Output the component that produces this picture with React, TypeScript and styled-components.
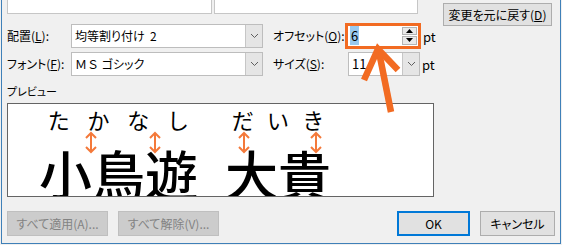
import * as React from "react"
import styled, { createGlobalStyle } from "styled-components"

const GlobalStyle = createGlobalStyle`
  html, body {
    margin: 0;
    padding: 0;
    background: #f0f0f0;
  }
  body {
    font-family: "Noto Sans CJK JP", "Liberation Sans", sans-serif;
    font-size: 12px;
    font-feature-settings: "palt";
    color: #000;
  }
`

const ORANGE = "#f26b22"

const Window = styled.div`
  position: relative;
  box-sizing: border-box;
  margin-left: 1px;
  width: 560px;
  height: 244px;
  padding-left: 5px;
  background: #f0f0f0;
  border-left: 1px solid #3f80b8;
  border-right: 1px solid #3f80b8;
  border-bottom: 1px solid #3f80b8;
  overflow: hidden;
`

const Top = styled.div`
  display: flex;
`

const Main = styled.div`
  flex: 1;
  display: flex;
  flex-direction: column;
`

const Stubs = styled.div`
  display: flex;
  gap: 2px;
`

const Stub = styled.div<{ $w: number }>`
  box-sizing: border-box;
  width: ${p => p.$w}px;
  height: 14px;
  background: #fff;
  border: 1px solid #c6c6c6;
  border-top: none;
`

const FormRow = styled.div<{ $mt: number }>`
  display: flex;
  align-items: center;
  height: 24px;
  margin-top: ${p => p.$mt}px;
`

const Label = styled.label<{ $w: number; $ml?: number }>`
  width: ${p => p.$w}px;
  margin-left: ${p => p.$ml ?? 0}px;
  white-space: nowrap;
  line-height: 24px;
  u {
    text-decoration: underline;
    text-underline-offset: 1px;
  }
`

const Combo = styled.div<{ $w: number }>`
  box-sizing: border-box;
  display: flex;
  width: ${p => p.$w}px;
  height: 24px;
  background: #fff;
  border: 1px solid #bdbdbd;
`

const ComboText = styled.div<{ $size?: number }>`
  flex: 1;
  padding-left: 3px;
  line-height: 22px;
  font-size: ${p => p.$size ?? 12}px;
  white-space: pre;
  overflow: hidden;
  .wide {
    font-feature-settings: normal;
  }
`

const ComboArrow = styled.div`
  width: 16px;
  display: flex;
  align-items: center;
  justify-content: center;
  background: #e5e5e5;
  border-left: 1px solid #c6c6c6;
`

const SpinFrame = styled.div`
  box-sizing: border-box;
  display: flex;
  align-items: stretch;
  width: 76px;
  height: 26px;
  margin-top: -1px;
  background: #fff;
  border: 3px solid ${ORANGE};
`

const SpinText = styled.div`
  flex: 1;
  padding-left: 2px;
  display: flex;
  align-items: center;
  font-size: 13px;
  span {
    background: #99c9ef;
    padding: 0 1px;
    line-height: 19px;
  }
`

const SpinButtons = styled.div`
  width: 15px;
  margin: 1px 1px 1px 0;
  display: flex;
  flex-direction: column;
  gap: 1px;
`

const SpinBtn = styled.div`
  flex: 1;
  display: flex;
  align-items: center;
  justify-content: center;
  background: #e9e9e9;
  border: 1px solid #b4b4b4;
`

const Unit = styled.span`
  margin-left: 2px;
  font-size: 13px;
`

const Button = styled.button<{ $w: number; $primary?: boolean }>`
  box-sizing: border-box;
  width: ${p => p.$w}px;
  height: 25px;
  padding: 0;
  font-family: inherit;
  font-size: 12px;
  font-feature-settings: "palt";
  color: #000;
  background: #e1e1e1;
  border: ${p => (p.$primary ? "2px solid #0078d7" : "1px solid #adadad")};
  &:disabled {
    background: #cccccc;
    border-color: #bfbfbf;
    color: #838383;
  }
  u {
    text-underline-offset: 1px;
  }
`

const ResetButton = styled(Button)`
  height: 23px;
  margin: 3px 8px 0 0;
`

const PreviewLabel = styled.div`
  margin-top: 8px;
  line-height: 14px;
  font-size: 11px;
`

const Preview = styled.div`
  position: relative;
  box-sizing: border-box;
  width: 427px;
  height: 94px;
  margin-top: 5px;
  padding: 4px 0 0 31px;
  background: #fff;
  border: 1px solid #646464;
  overflow: hidden;
  display: flex;
  gap: 27px;
  font-feature-settings: normal;
`

const RubyGroup = styled.div`
  display: flex;
  flex-direction: column;
`

const Kana = styled.div`
  display: flex;
  justify-content: space-around;
  font-size: 22px;
  line-height: 22px;
`

const Kanji = styled.div`
  margin-top: 17px;
  font-size: 53px;
  font-weight: 500;
  line-height: 53px;
  white-space: nowrap;
`

const Marker = styled.svg<{ $x: number }>`
  position: absolute;
  top: 27px;
  left: ${p => p.$x}px;
`

const Footer = styled.div`
  display: flex;
  margin-top: 14px;
  padding-right: 5px;
  gap: 10px;
`

const Spacer = styled.div`
  flex: 1;
`

const Callout = styled.svg`
  position: absolute;
  left: -2px;
  top: 0;
  pointer-events: none;
`

const Chevron = () => (
  <svg width="9" height="6" viewBox="0 0 9 6">
    <polyline points="1,1 4.5,4.5 8,1" fill="none" stroke="#5f5f5f" strokeWidth="1" />
  </svg>
)

const DoubleArrow = ({ x }: { x: number }) => (
  <Marker $x={x} width="14" height="23" viewBox="0 0 14 23">
    <g fill="none" stroke="#f4793a" strokeWidth="2">
      <line x1="7" y1="2" x2="7" y2="21" />
      <polyline points="2,7 7,2 12,7" />
      <polyline points="2,16 7,21 12,16" />
    </g>
  </Marker>
)

export default function App() {
  return (
    <>
      <GlobalStyle />
      <Window>
        <Top>
          <Main>
            <Stubs>
              <Stub $w={205} />
              <Stub $w={204} />
            </Stubs>
            <FormRow $mt={10}>
              <Label $w={64}>
                配置(<u>L</u>):
              </Label>
              <Combo $w={192}>
                <ComboText>均等割り付け  2</ComboText>
                <ComboArrow>
                  <Chevron />
                </ComboArrow>
              </Combo>
              <Label $w={72} $ml={10}>
                オフセット(<u>O</u>):
              </Label>
              <SpinFrame>
                <SpinText>
                  <span>6</span>
                </SpinText>
                <SpinButtons>
                  <SpinBtn>
                    <svg width="7" height="4" viewBox="0 0 7 4">
                      <polygon points="0,4 3.5,0 7,4" fill="#000" />
                    </svg>
                  </SpinBtn>
                  <SpinBtn>
                    <svg width="7" height="4" viewBox="0 0 7 4">
                      <polygon points="0,0 3.5,4 7,0" fill="#000" />
                    </svg>
                  </SpinBtn>
                </SpinButtons>
              </SpinFrame>
              <Unit>pt</Unit>
            </FormRow>
            <FormRow $mt={4}>
              <Label $w={64}>
                フォント(<u>F</u>):
              </Label>
              <Combo $w={192}>
                <ComboText>
                  <span className="wide">ＭＳ </span>ゴシック
                </ComboText>
                <ComboArrow>
                  <Chevron />
                </ComboArrow>
              </Combo>
              <Label $w={75} $ml={10}>
                サイズ(<u>S</u>):
              </Label>
              <Combo $w={72}>
                <ComboText $size={13}>11</ComboText>
                <ComboArrow>
                  <Chevron />
                </ComboArrow>
              </Combo>
              <Unit>pt</Unit>
            </FormRow>
          </Main>
          <ResetButton $w={109}>
            変更を元に戻す(<u>D</u>)
          </ResetButton>
        </Top>

        <PreviewLabel>プレビュー</PreviewLabel>
        <Preview>
          <RubyGroup>
            <Kana>
              <span>た</span>
              <span>か</span>
              <span>な</span>
              <span>し</span>
            </Kana>
            <Kanji>小鳥遊</Kanji>
          </RubyGroup>
          <RubyGroup>
            <Kana>
              <span>だ</span>
              <span>い</span>
              <span>き</span>
            </Kana>
            <Kanji>大貴</Kanji>
          </RubyGroup>
          <DoubleArrow x={76} />
          <DoubleArrow x={140} />
          <DoubleArrow x={229} />
          <DoubleArrow x={301} />
        </Preview>

        <Footer>
          <Button $w={101} disabled>
            すべて適用(A)...
          </Button>
          <Button $w={101} disabled>
            すべて解除(V)...
          </Button>
          <Spacer />
          <Button $w={73} $primary>
            OK
          </Button>
          <Button $w={75}>キャンセル</Button>
        </Footer>

        <Callout width="562" height="245" viewBox="0 0 562 245">
          <g fill="none" stroke={ORANGE} strokeWidth="6.5" strokeLinecap="butt" strokeLinejoin="miter">
            <line x1="391" y1="112" x2="379" y2="52" />
            <polyline points="364,80 378,49 398,70" />
          </g>
        </Callout>
      </Window>
    </>
  )
}
